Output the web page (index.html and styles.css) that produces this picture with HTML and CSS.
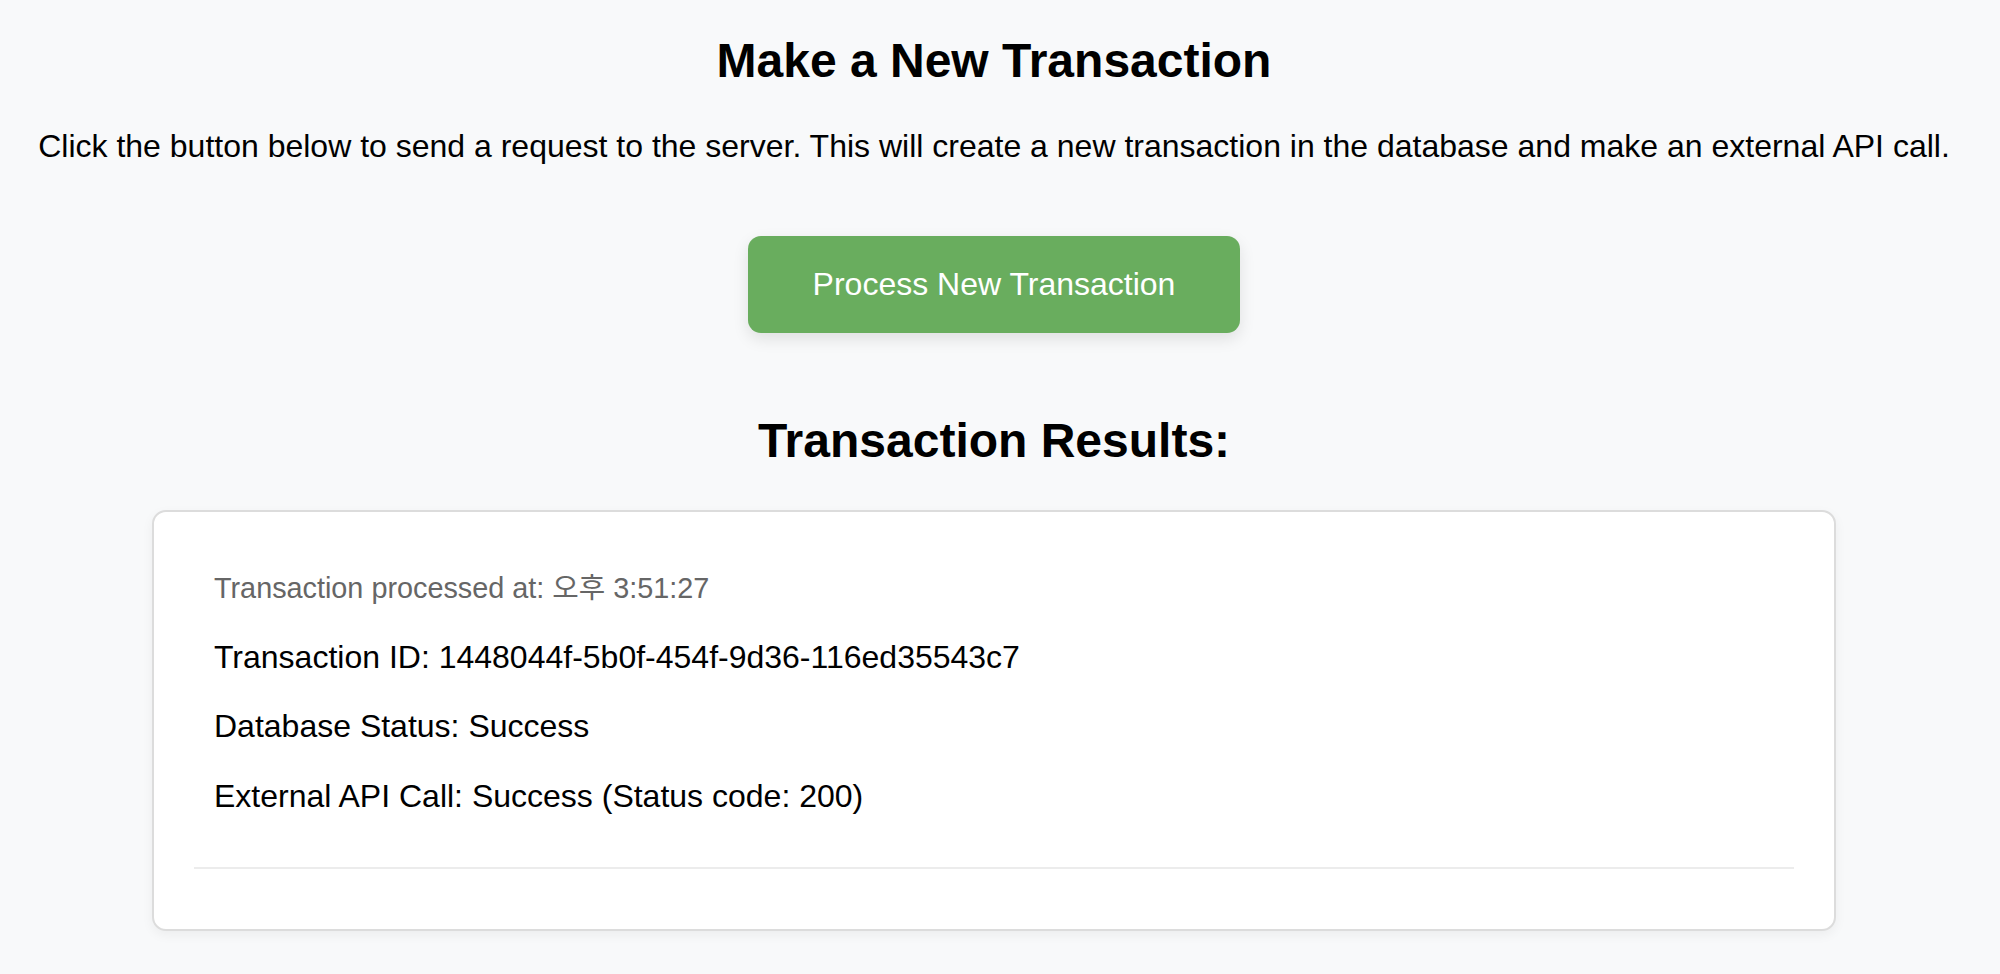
FILE: index.html
```html
<!DOCTYPE html>
<html lang="en">
<head>
<meta charset="utf-8">
<title>Make a New Transaction</title>
<link rel="stylesheet" href="styles.css">
</head>
<body>
<main class="page">
  <h1 class="title">Make a New Transaction</h1>
  <p class="intro">Click the button below to send a request to the server. This will create a new transaction in the database and make an external API call.</p>
  <button class="process-btn" type="button">Process New Transaction</button>
  <h2 class="results-title">Transaction Results:</h2>
  <section class="results-card">
    <div class="result-item">
      <p class="result-time">Transaction processed at: 오후 3:51:27</p>
      <p class="result-line">Transaction ID: 1448044f-5b0f-454f-9d36-116ed35543c7</p>
      <p class="result-line">Database Status: Success</p>
      <p class="result-line">External API Call: Success (Status code: 200)</p>
    </div>
  </section>
</main>
</body>
</html>
```

FILE: styles.css
```css
html, body {
  margin: 0;
  padding: 0;
  background: #f8f9fa;
}

body {
  font-family: "Liberation Sans", Arial, "Noto Sans CJK KR", sans-serif;
  color: #000;
}

.page {
  display: flex;
  flex-direction: column;
  align-items: center;
  padding: 33px 12px 40px 0;
}

.title {
  font-size: 48px;
  font-weight: bold;
  line-height: 1.15;
  margin: 0 0 40px;
  text-align: center;
}

.intro {
  font-size: 32px;
  line-height: 1.15;
  margin: 0 0 71px;
  text-align: center;
}

.process-btn {
  font-family: inherit;
  font-size: 32px;
  line-height: 1.15;
  color: #fff;
  background: #69ad5e;
  border: none;
  border-radius: 13px;
  padding: 30px 65px;
  box-shadow: 0 6px 16px rgba(0, 0, 0, 0.1);
  cursor: pointer;
  margin: 0 0 80px;
}

.results-title {
  font-size: 48px;
  font-weight: bold;
  line-height: 1.15;
  margin: 0 0 42px;
  text-align: center;
}

.results-card {
  box-sizing: border-box;
  width: 1684px;
  background: #fff;
  border: 2px solid #dcdcdc;
  border-radius: 14px;
  padding: 40px;
  box-shadow: 0 4px 12px rgba(0, 0, 0, 0.05);
}

.result-item {
  padding: 20px;
  margin-bottom: 20px;
  border-bottom: 2px solid #ececec;
}

.result-time {
  font-size: 28.8px;
  line-height: 1.15;
  color: #666;
  margin: 0 0 34px;
}

.result-line {
  font-size: 32px;
  line-height: 1.15;
  margin: 0 0 32.5px;
}
```
